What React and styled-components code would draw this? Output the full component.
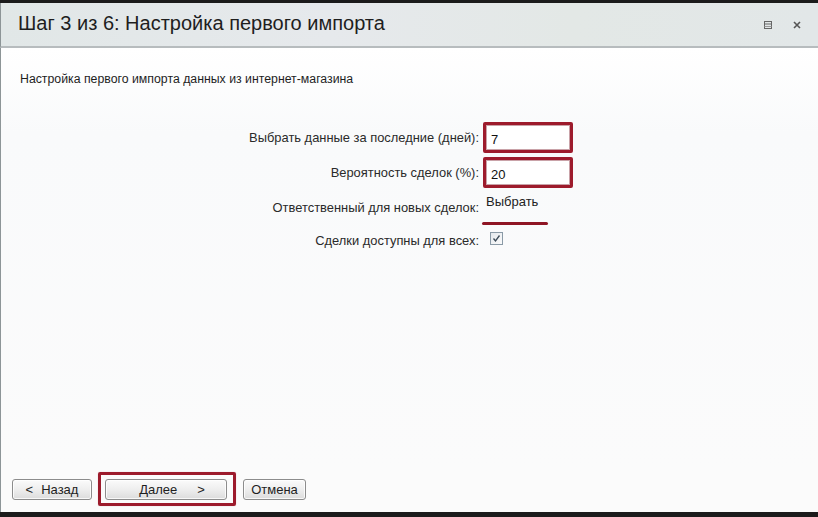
import styled, { createGlobalStyle } from "styled-components";

const Global = createGlobalStyle`
  html, body {
    margin: 0;
    padding: 0;
    background: #ffffff;
  }
  body {
    font-family: "Liberation Sans", Arial, sans-serif;
    color: #222;
  }
`;

const Window = styled.div`
  width: 818px;
  height: 517px;
  display: flex;
  flex-direction: column;
  background: #1b1b1b;
  padding-top: 3px;
  padding-bottom: 5px;
  box-sizing: border-box;
  overflow: hidden;
`;

const Header = styled.div`
  height: 43px;
  display: flex;
  align-items: center;
  justify-content: space-between;
  padding: 0 17px 0 17px;
  background: linear-gradient(90deg, #e1e7e7 0%, #e6e9ec 40%, #e3e8e6 70%, #e2e7e8 100%);
  border-bottom: 2px solid #b7bcbe;
  border-left: 1px solid #8d9597;
`;

const Title = styled.h1`
  margin: 0 0 2px;
  font-size: 20px;
  font-weight: 400;
  color: #1e1e1e;
`;

const Controls = styled.div`
  display: flex;
  align-items: center;
  gap: 21px;
  color: #555;
`;

const Body = styled.div`
  flex: 1;
  display: flex;
  flex-direction: column;
  background: linear-gradient(180deg, #ffffff 0%, #f9fafb 20%, #fbfbfb 100%);
  border-left: 1px solid #8d9597;
`;

const Intro = styled.p`
  margin: 24px 0 0 19px;
  font-size: 12.3px;
  color: #1e1e1e;
`;

const Form = styled.div`
  display: flex;
  flex-direction: column;
  margin-top: 36px;
`;

const Row = styled.div`
  display: flex;
  align-items: ${(p) => p.$align || "center"};
  height: ${(p) => p.$h}px;
  margin-bottom: ${(p) => p.$mb || 0}px;
`;

const Label = styled.label`
  width: 482px;
  padding-right: 4px;
  box-sizing: border-box;
  text-align: right;
  font-size: 12.9px;
  color: #2a2a2a;
  padding-top: ${(p) => p.$pt || 0}px;
`;

const Input = styled.input`
  width: 90px;
  height: 31px;
  box-sizing: border-box;
  border: 3px solid #9d1b2c;
  border-radius: 2px;
  padding: 3px 0 0 5px;
  font: 13px "Liberation Sans", Arial, sans-serif;
  color: #111;
  background: #fff;
  outline: none;
  box-shadow: inset 0 0 0 1px #c9a2a8;
`;

const Pick = styled.div`
  display: flex;
  flex-direction: column;
  padding-left: 2px;
`;

const PickLink = styled.span`
  font-size: 13px;
  color: #222;
  padding-left: 1px;
  margin-top: 6px;
`;

const Underline = styled.span`
  display: block;
  width: 66px;
  height: 3px;
  margin-top: 13px;
  margin-left: -3px;
  border-radius: 2px;
  background: #8f1524;
`;

const Check = styled.span`
  width: 11px;
  height: 11px;
  margin-left: 7px;
  margin-top: -3px;
  border: 1px solid #8a9aa6;
  background: linear-gradient(135deg, #e4e8ec, #fafafa);
  display: flex;
  align-items: center;
  justify-content: center;
`;

const Footer = styled.div`
  display: flex;
  align-items: center;
  padding: 0 0 6px 11px;
  background: #fbfbfb;
  border-left: 1px solid #8d9597;
`;

const Button = styled.button`
  height: 21px;
  width: ${(p) => p.$w}px;
  margin-left: ${(p) => p.$ml || 0}px;
  box-sizing: border-box;
  border: 1px solid #8c8c8c;
  border-radius: 3px;
  background: linear-gradient(180deg, #fbfbfb 0%, #eeeeee 50%, #dcdcdc 100%);
  font: 13px "Liberation Sans", Arial, sans-serif;
  color: #1e1e1e;
  padding: ${(p) => p.$pad || 0};
  display: flex;
  align-items: center;
  justify-content: center;
  gap: ${(p) => p.$gap || 0}px;
  box-shadow: inset 0 0 0 1px rgba(255, 255, 255, 0.8);
`;

const Highlight = styled.div`
  margin-left: 6px;
  border: 3px solid #9d1b2c;
  border-radius: 2px;
  padding: 4px 6px 3px 4px;
  box-shadow: 0 0 1px #c9a2a8;
`;

const App = () => {
  return (
    <>
      <Global />
      <Window>
        <Header>
          <Title>Шаг 3 из 6: Настройка первого импорта</Title>
          <Controls>
            <svg width="8" height="8" viewBox="0 0 8 8">
              <rect x="0.5" y="0.5" width="7" height="7" fill="none" stroke="#666" />
              <line x1="0.5" y1="3" x2="7.5" y2="3" stroke="#666" />
              <line x1="0.5" y1="5.5" x2="7.5" y2="5.5" stroke="#999" />
            </svg>
            <svg width="8" height="8" viewBox="0 0 8 8">
              <path d="M1 1 L7 7 M7 1 L1 7" stroke="#555" strokeWidth="1.6" />
            </svg>
          </Controls>
        </Header>
        <Body>
          <Intro>Настройка первого импорта данных из интернет-магазина</Intro>
          <Form>
            <Row $h={31} $mb={4}>
              <Label>Выбрать данные за последние (дней):</Label>
              <Input defaultValue="7" />
            </Row>
            <Row $h={31}>
              <Label>Вероятность сделок (%):</Label>
              <Input defaultValue="20" />
            </Row>
            <Row $h={38} $align="flex-start">
              <Label $pt={12}>Ответственный для новых сделок:</Label>
              <Pick>
                <PickLink>Выбрать</PickLink>
                <Underline />
              </Pick>
            </Row>
            <Row $h={28}>
              <Label>Сделки доступны для всех:</Label>
              <Check>
                <svg width="9" height="9" viewBox="0 0 9 9">
                  <path d="M1.5 4.5 L3.5 7 L7.5 1.5" fill="none" stroke="#3b4a57" strokeWidth="1.3" />
                </svg>
              </Check>
            </Row>
          </Form>
        </Body>
        <Footer>
          <Button $w={80} $gap={8}>
            <span>&lt;</span>
            <span>Назад</span>
          </Button>
          <Highlight>
            <Button $w={122} $gap={20} $pad="0 0 0 12px">
              <span>Далее</span>
              <span>&gt;</span>
            </Button>
          </Highlight>
          <Button $w={63} $ml={7}>Отмена</Button>
        </Footer>
      </Window>
    </>
  );
};

export default App;
